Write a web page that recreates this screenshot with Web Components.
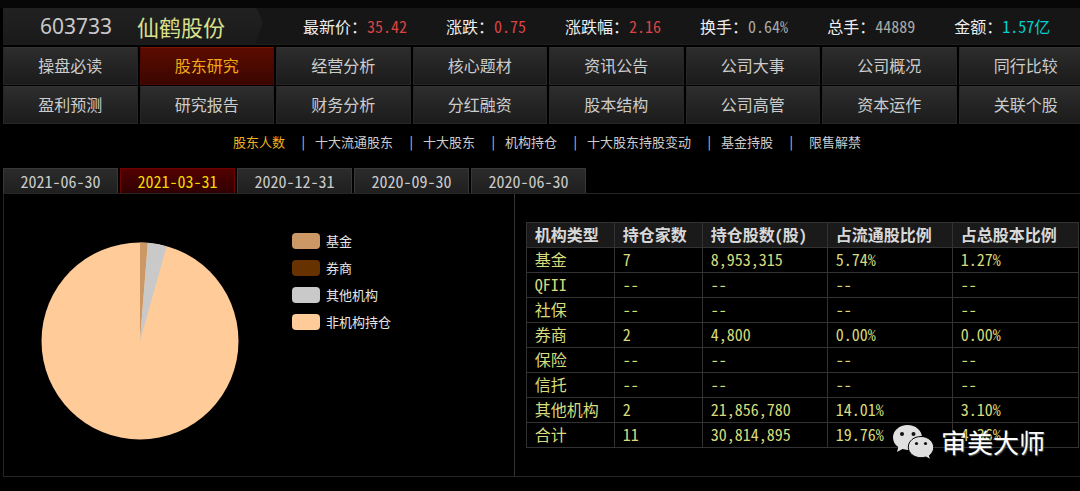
<!DOCTYPE html>
<html lang="zh-CN">
<head>
<meta charset="utf-8">
<title>仙鹤股份 603733 - 股东研究</title>
<style>
  html { background: #000; }
  body {
    margin: 0; background: #000; color: #ccc; overflow-x: hidden;
    font: 16px/24px "Noto Sans Mono CJK SC", "Noto Sans CJK SC", "Liberation Mono", monospace;
  }
</style>
</head>
<body>
<stock-page></stock-page>

<script>
const define = (name, html, setup) => {
  const template = document.createElement('template');
  template.innerHTML = html;
  customElements.define(name, class extends HTMLElement {
    connectedCallback() {
      if (this.shadowRoot) return;
      const root = this.attachShadow({ mode: 'open' });
      root.append(template.content.cloneNode(true));
      if (setup) setup(root, this);
    }
  });
};

define('quote-item', `
  <style>
    :host { display: block; white-space: nowrap; color: #aaa; }
    :host([tone=up]) { color: #d94444; }
    :host([tone=cash]) { color: #00d0d0; font-weight: 500; }
    .label { color: #eee; }
  </style><span class="label"><slot name="label"></slot></span><slot></slot>`);

define('stock-header', `
  <style>
    :host { display: flex; align-items: center; height: 37px; background: #161616; border-bottom: 1px solid #1e1e1e; box-sizing: border-box; }
    .title {
      flex: none; box-sizing: border-box; width: 260px; height: 36px; padding-left: 37px; margin-right: 40px;
      display: flex; align-items: center; gap: 25px;
      background: linear-gradient(#212121, #1a1a1a);
      clip-path: polygon(0 0, 253px 0, 100% 14px, 252px 100%, 0 100%);
    }
    .code { font: 21px/32px "Noto Sans", sans-serif; color: #c8c8c8; }
    h1 { margin: 0; font-size: 22px; line-height: 32px; font-weight: 400; color: #dbe08d; }
    .quotes { display: flex; gap: 39px; }
  </style>
  <div class="title"><span class="code">603733</span><h1>仙鹤股份</h1></div>
  <div class="quotes">
    <quote-item tone="up"><span slot="label">最新价：</span>35.42</quote-item>
    <quote-item tone="up"><span slot="label">涨跌：</span>0.75</quote-item>
    <quote-item tone="up"><span slot="label">涨跌幅：</span>2.16</quote-item>
    <quote-item><span slot="label">换手：</span>0.64%</quote-item>
    <quote-item><span slot="label">总手：</span>44889</quote-item>
    <quote-item tone="cash"><span slot="label">金额：</span>1.57亿</quote-item>
  </div>`);

define('nav-grid', `
  <style>
    :host { display: block; margin: 2px -13px 0 0; }
    nav { display: grid; grid-template-columns: repeat(8, 1fr); gap: 1px 2px; }
    a {
      height: 38px; line-height: 34px; box-sizing: border-box; text-align: center; text-decoration: none; color: #ccc;
      background: linear-gradient(#2d2d2d, #1b1b1b); border: 1px solid #262626; border-top-color: #333;
    }
    a[aria-current] { color: #f0a818; background: linear-gradient(#5c0c00, #3a0600); border-color: #4c0800; border-top-color: #7c1400; }
  </style>
  <nav aria-label="栏目"></nav>`, root => {
  const names = '操盘必读 股东研究 经营分析 核心题材 资讯公告 公司大事 公司概况 同行比较 盈利预测 研究报告 财务分析 分红融资 股本结构 公司高管 资本运作 关联个股'.split(' ');
  root.querySelector('nav').innerHTML = names.map((n, i) => `<a href="#"${i === 1 ? ' aria-current="page"' : ''}>${n}</a>`).join('');
});

define('sub-nav', `
  <style>
    :host { display: block; padding: 6px 0 14px 230px; }
    nav { display: flex; font-size: 13px; line-height: 24px; white-space: nowrap; color: #ccc; }
    a { color: inherit; text-decoration: none; }
    a[aria-current] { color: #f0b020; }
    .bar { width: 30px; padding-left: 15px; box-sizing: border-box; }
    .bar:last-of-type { width: 36px; }
  </style>
  <nav aria-label="股东研究"></nav>`, root => {
  const names = ['股东人数', '十大流通股东', '十大股东', '机构持仓', '十大股东持股变动', '基金持股', '限售解禁'];
  root.querySelector('nav').innerHTML = names
    .map((n, i) => `<a href="#"${i ? '' : ' aria-current="true"'}>${n}</a>`).join('<span class="bar">|</span>');
});

define('date-tabs', `
  <style>
    :host { display: flex; gap: 2px; }
    button {
      width: 115px; height: 25px; padding: 0; margin: 0; font: inherit; line-height: 22px; color: #ccc; text-align: center;
      background: linear-gradient(#2b2b2b, #1f1f1f); border: 1px solid #383838; border-bottom: 0;
    }
    button[aria-pressed=true] { color: #f5d800; background: linear-gradient(#520000, #300000); border-color: #740000; }
  </style>
  <button type="button" aria-pressed="false">2021-06-30</button>
  <button type="button" aria-pressed="true">2021-03-31</button>
  <button type="button" aria-pressed="false">2020-12-31</button>
  <button type="button" aria-pressed="false">2020-09-30</button>
  <button type="button" aria-pressed="false">2020-06-30</button>`);

define('holdings-pie', `
  <style>
    :host { display: flex; align-items: flex-start; gap: 53px; padding: 48px 0 0 37px; }
    svg { flex: none; width: 198px; height: 198px; }
    ul { list-style: none; margin: 0; margin-top: -11px; padding: 0; font-size: 13px; line-height: 20px; color: #e6e6e6; }
    li { display: flex; align-items: center; gap: 6px; height: 20px; margin-bottom: 7px; }
    i { width: 28px; height: 16px; border-radius: 4px; background: var(--c); }
  </style>
  <svg viewBox="-99 -99 198 198" role="img" aria-label="持仓比例">
    <circle r="98.5" fill="#ffcc99"/>
    <path fill="#cc9966"/><path fill="#c9c9c9"/>
  </svg>
  <ul>
    <li><i style="--c:#cc9966"></i>基金</li>
    <li><i style="--c:#663300"></i>券商</li>
    <li><i style="--c:#c9c9c9"></i>其他机构</li>
    <li><i style="--c:#ffcc99"></i>非机构持仓</li>
  </ul>`, root => {
  const point = share => {
    const a = share * 2 * Math.PI;
    return `${98.5 * Math.sin(a)} ${-98.5 * Math.cos(a)}`;
  };
  const [fund, other] = root.querySelectorAll('path');
  fund.setAttribute('d', `M0 0L${point(0)}A98.5 98.5 0 0 1 ${point(0.0127)}Z`);
  other.setAttribute('d', `M0 0L${point(0.0127)}A98.5 98.5 0 0 1 ${point(0.0437)}Z`);
});

define('holdings-table', `
  <style>
    :host { display: block; padding: 28px 0 28px 11px; }
    table { width: 100%; border-collapse: collapse; table-layout: fixed; color: #d6dc7c; }
    th, td { border: 1px solid #333; height: 24px; line-height: 22px; vertical-align: top; padding: 0 0 0 8px; text-align: left; font-weight: 400; white-space: nowrap; }
    thead th { background: #1a1a1a; color: #d8d8d8; font-weight: 700; }
    .n { width: 88px; box-sizing: border-box; } .w { width: 125px; box-sizing: border-box; }
  </style>
  <table>
    <thead><tr><th class="n">机构类型</th><th class="n">持仓家数</th><th class="w">持仓股数(股)</th><th class="w">占流通股比例</th><th>占总股本比例</th></tr></thead>
    <tbody></tbody>
  </table>`, root => {
  const rows = [
    ['基金', '7', '8,953,315', '5.74%', '1.27%'],
    ['QFII', '--', '--', '--', '--'],
    ['社保', '--', '--', '--', '--'],
    ['券商', '2', '4,800', '0.00%', '0.00%'],
    ['保险', '--', '--', '--', '--'],
    ['信托', '--', '--', '--', '--'],
    ['其他机构', '2', '21,856,780', '14.01%', '3.10%'],
    ['合计', '11', '30,814,895', '19.76%', '4.36%']
  ];
  root.querySelector('tbody').innerHTML = rows
    .map(([h, ...c]) => `<tr><th scope="row">${h}</th>${c.map(v => `<td>${v}</td>`).join('')}</tr>`).join('');
});

define('account-mark', `
  <style>
    :host { display: flex; align-items: center; gap: 7px; color: #fff; font: 26px/36px "Noto Sans CJK SC", sans-serif; text-shadow: 1px 1px 1px #555; }
    svg { width: 41px; height: 35px; }
  </style>
  <svg viewBox="0 0 41 35" aria-hidden="true">
    <path fill="#e0e0e0" d="M14.500 0C6.500 0 0 5.500 0 12.500c0 4 2 7.300 5.300 9.600L4 27l5.500-2.900c1.600.5 3.300.8 5 .8C22.500 25 29 19.500 29 12.500S22.500 0 14.500 0z"/>
    <path fill="#e0e0e0" stroke="#000" stroke-width="1" d="M28 11.500c7 0 12.700 4.900 12.700 11 0 3.300-1.700 6-4.300 8l1.200 4-4.800-2.500c-1.500.4-3.100.7-4.800.7-7 0-12.700-4.400-12.700-10.600 0-6.100 5.700-10.600 12.700-10.600z"/>
    <g fill="#111"><circle cx="9" cy="9" r="2"/><circle cx="20.500" cy="9" r="2"/><circle cx="23.500" cy="18.500" r="1.600"/><circle cx="32.500" cy="18.500" r="1.600"/></g>
  </svg>
  <slot></slot>`);

define('stock-page', `
  <style>
    :host { display: block; padding: 8px 0 14px 3px; background: linear-gradient(#070707 8px, #000 8px); }
    .panel { position: relative; display: grid; grid-template-columns: 9fr 10fr; border: 1px solid #262626; border-right: 0; }
    holdings-table { border-left: 1px solid #333; padding-right: 1px; }
    account-mark { position: absolute; right: 35px; bottom: 16px; }
  </style>
  <stock-header></stock-header>
  <nav-grid></nav-grid>
  <sub-nav></sub-nav>
  <date-tabs></date-tabs>
  <main class="panel">
    <holdings-pie></holdings-pie>
    <holdings-table></holdings-table>
    <account-mark>审美大师</account-mark>
  </main>`);
</script>
</body>
</html>
